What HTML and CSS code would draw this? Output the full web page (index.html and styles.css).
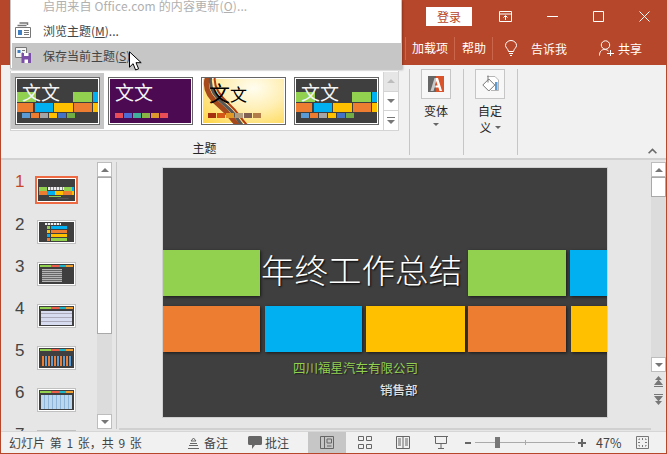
FILE: index.html
```html
<!DOCTYPE html>
<html lang="zh">
<head>
<meta charset="utf-8">
<title>PowerPoint</title>
<link rel="stylesheet" href="styles.css">
</head>
<body>
<div class="app">
  <header class="chrome">
    <div class="win-row">
      <span class="login">登录</span>
      <svg class="win-ico" width="13" height="11" viewBox="0 0 13 11"><path d="M.5.500h12v10H.5zM.5 3h12M6.500 9V5M4.500 6.500l2-2 2 2" fill="none" stroke="#fff"/></svg>
      <svg class="win-ico" width="11" height="11" viewBox="0 0 11 11"><path d="M0 5.500h11" stroke="#fff"/></svg>
      <svg class="win-ico" width="11" height="11" viewBox="0 0 11 11"><path d="M.5.500h10v10H.5z" fill="none" stroke="#fff"/></svg>
      <svg class="win-ico" width="11" height="11" viewBox="0 0 11 11"><path d="M.5.500l10 10M10.500.500l-10 10" stroke="#fff"/></svg>
    </div>
    <div class="tab-row">
      <span class="tab">加载项</span>
      <span class="tab">帮助</span>
      <span class="tab plain">
        <svg width="12" height="16" viewBox="0 0 12 16"><path d="M3.500 11.500C3.200 8.800.5 7.800.5 5.500a5.500 5 0 0 1 11 0c0 2.300-2.700 3.300-3 6zM4 13.500h4M5 15.500h2" fill="none" stroke="#fff"/></svg>
        <span class="tell">告诉我</span>
      </span>
      <span class="share">
        <svg width="15" height="16" viewBox="0 0 15 16"><path d="M.5 15.500c0-4 2-6 5-6 1.500 0 3 .5 4 1.500" fill="none" stroke="#fff"/><circle cx="6.500" cy="5" r="4.200" fill="none" stroke="#fff"/><path d="M8 13.500h7M11.500 10v6" stroke="#fff"/></svg>
        共享
      </span>
    </div>
  </header>

  <section class="ribbon">
    <div class="themes">
      <div class="gallery">
        <div class="theme-cell active">
          <div class="theme dark"><span class="tbar b1"></span><span class="tbar b2"></span><span class="wen w-light">文文</span><span class="dots"><i class="c1"></i><i class="c2"></i><i class="c3"></i><i class="c4"></i><i class="c5"></i><i class="c6"></i></span></div>
        </div>
        <div class="theme-cell">
          <div class="theme purple"><span class="wen w-light">文文</span><span class="dots"><i class="p1"></i><i class="p2"></i><i class="p3"></i><i class="p4"></i><i class="p5"></i><i class="p1"></i></span></div>
        </div>
        <div class="theme-cell">
          <div class="theme sunny">
            <svg class="swoosh" width="83" height="46" viewBox="0 0 83 46"><path d="M6 -2C1 10 8 20 18 28S30 42 36 47" fill="none" stroke="#a6491c" stroke-width="5"/><path d="M9 -2C6 10 13 19 23 27S35 41 40 47" fill="none" stroke="#585858" stroke-width="3"/><path d="M13 -2C11 8 17 17 27 26S38 40 45 47" fill="none" stroke="#b03c14" stroke-width="2"/></svg>
            <span class="wen w-dark">文<span class="wen-small">文</span></span>
            <span class="dots"><i class="s1"></i><i class="s2"></i><i class="s3"></i><i class="s4"></i><i class="s5"></i><i class="s6"></i></span>
          </div>
        </div>
        <div class="theme-cell">
          <div class="theme dark"><span class="tbar b1"></span><span class="tbar b2"></span><span class="wen w-light">文文</span><span class="dots"><i class="c1"></i><i class="c2"></i><i class="c3"></i><i class="c4"></i><i class="c5"></i><i class="c6"></i></span></div>
        </div>
        <div class="gal-btns">
          <span class="gal-btn off"><b class="up"></b></span>
          <span class="gal-btn"><b class="down"></b></span>
          <span class="gal-btn"><b class="more"></b></span>
        </div>
      </div>
      <div class="group-label">主题</div>
    </div>
    <div class="rb-sep"></div>
    <div class="rb-tool">
      <span class="rb-box">
        <svg width="16" height="16" viewBox="0 0 16 16"><rect width="16" height="16" fill="#666"/><path d="M8 0h8v16H8z" fill="#d9542b"/><path d="M8 2h2l4 13h-2.500l-1-3.500H8V9.500h1.600L8.300 5 8 6z" fill="#fff"/><path d="M2.500 15L6.500 2H8v4L6.900 9.500H8v2H6.500l-1 3.500z" fill="#c9c9c9"/></svg>
      </span>
      <span class="rb-text">变体</span>
      <b class="caret"></b>
    </div>
    <div class="rb-sep"></div>
    <div class="rb-tool">
      <span class="rb-box">
        <svg width="17" height="18" viewBox="0 0 17 18"><path d="M5 1.500h8l3.500 3.500v10.500H9" fill="#fff" stroke="#b5b5b5"/><path d="M.8 10l6-6 6 6-6 6z" fill="#fff" stroke="#777"/><path d="M13 7h2.500v8H13z" fill="#5d9bd5"/><path d="M6 .5v7" stroke="#777" fill="none"/></svg>
      </span>
      <span class="rb-text">自定</span>
      <span class="rb-text">义<b class="caret inline"></b></span>
    </div>
    <div class="rb-sep"></div>
    <svg class="collapse" width="9" height="6" viewBox="0 0 9 6"><path d="M.6 5.300L4.500 1.400 8.400 5.300" fill="none" stroke="#6a6a6a" stroke-width="1.600"/></svg>
  </section>

  <main class="workspace">
    <aside class="thumbs">
      <div class="thumb-list">
        <div class="row first"><span class="num cur">1</span><div class="mini sel"><i class="mb g"></i><i class="mb o"></i><i class="m-title"></i><i class="m-sub"></i></div></div>
        <div class="row"><span class="num">2</span><div class="mini"><i class="m-head"></i><i class="ln l1"></i><i class="ln l2"></i><i class="ln l3"></i><i class="ln l4"></i></div></div>
        <div class="row"><span class="num">3</span><div class="mini"><i class="hd"></i><i class="tx"></i></div></div>
        <div class="row"><span class="num">4</span><div class="mini"><i class="hd"></i><i class="tb"></i></div></div>
        <div class="row"><span class="num">5</span><div class="mini"><i class="hd"></i><i class="ch"></i></div></div>
        <div class="row"><span class="num">6</span><div class="mini"><i class="hd"></i><i class="tb blue"></i></div></div>
        <div class="row"><span class="num">7</span><div class="mini"></div></div>
      </div>
      <div class="vscroll">
        <span class="sb-btn"><b class="up"></b></span>
        <span class="sb-thumb long"></span>
        <span class="sb-fill"></span>
        <span class="sb-btn"><b class="down"></b></span>
      </div>
    </aside>
    <div class="pane-line"></div>
    <section class="canvas">
      <div class="slide-area">
        <article class="slide">
          <div class="blocks one">
            <span class="blk green w97"></span>
            <h1 class="title">年终工作总结</h1>
            <span class="blk green w98"></span>
            <span class="blk blue w37"></span>
          </div>
          <div class="blocks two">
            <span class="blk orange w97"></span>
            <span class="blk blue w97"></span>
            <span class="blk yellow w99"></span>
            <span class="blk orange w98"></span>
            <span class="blk yellow w37"></span>
          </div>
          <p class="company">四川福星汽车有限公司</p>
          <p class="dept">销售部</p>
        </article>
      </div>
      <div class="vscroll main">
        <span class="sb-btn"><b class="up"></b></span>
        <span class="sb-thumb short"></span>
        <span class="sb-fill"></span>
        <span class="sb-btn"><b class="down"></b></span>
        <span class="sb-page"><svg width="9" height="11" viewBox="0 0 9 11"><path d="M4.500 0L8 4H1zM4.500 3.500L9 9H0zM0 10h9v1H0z" fill="#777"/></svg></span>
        <span class="sb-page"><svg width="9" height="11" viewBox="0 0 9 11"><path d="M0 0h9v1H0zM0 2h9L4.500 7.500zM1 7h7l-3.500 4z" fill="#777"/></svg></span>
      </div>
    </section>
  </main>

  <footer class="status">
    <span class="st-text">幻灯片 第 1 张，共 9 张</span>
    <span class="st-item notes"><svg width="11" height="12" viewBox="0 0 11 12"><path d="M5.500 1L3 4h5zM2 6.500h7M1 8.500h9M0 11.500h11" fill="none" stroke="#666"/></svg>备注</span>
    <span class="st-item comments"><svg width="14" height="13" viewBox="0 0 14 13"><path d="M1.500 0h11A1.500 1.500 0 0 1 14 1.500v6A1.500 1.500 0 0 1 12.500 9H7l-3 4V9H1.500A1.500 1.500 0 0 1 0 7.500v-6A1.500 1.500 0 0 1 1.500 0z" fill="#666"/></svg>批注</span>
    <span class="view on"><svg width="14" height="13" viewBox="0 0 14 13"><path d="M.5.500h13v12H.5zM4.500.500v12M7 3h4.500v4H7zM7 10h4.500" fill="none" stroke="#666"/></svg></span>
    <span class="view"><svg width="14" height="13" viewBox="0 0 14 13"><path d="M.5.500h5v4h-5zM8.500.500h5v4h-5zM.5 8.500h5v4h-5zM8.500 8.500h5v4h-5z" fill="none" stroke="#666"/></svg></span>
    <span class="view"><svg width="14" height="13" viewBox="0 0 14 13"><path d="M.5.500h13v12H.5zM7 .5v12M2 3h3M2 5h3M2 7h3M2 9h3M9 3h3M9 5h3M9 7h3M9 9h3" fill="none" stroke="#666"/></svg></span>
    <span class="view"><svg width="14" height="13" viewBox="0 0 14 13"><path d="M0 .5h14M1.500.5v7h11v-7M7 7.500V12M4 12.500h6" fill="none" stroke="#666"/></svg></span>
    <span class="zoom">
      <i class="z-sign"></i>
      <span class="z-track"><i class="z-mid"></i><i class="z-knob"></i></span>
      <i class="z-sign plus"></i>
    </span>
    <span class="pct">47%</span>
    <span class="fit"><svg width="13" height="13" viewBox="0 0 13 13"><path d="M.5.500h12v12H.5zM3 4V3h1M9 3h1v1M3 9v1h1M9 10h1V9M6.500 2v2M6.500 9v2M2 6.500h2M9 6.500h2" fill="none" stroke="#777"/></svg></span>
  </footer>

  <nav class="menu">
    <div class="mi dim"><span class="mi-ico"></span><span>启用来自 Office.com 的内容更新(<u>O</u>)...</span></div>
    <div class="mi">
      <span class="mi-ico"><svg width="16" height="16" viewBox="0 0 16 16"><path d="M4.500 1h8v2M2.500 3.500h9" fill="none" stroke="#777" stroke-width="1.500"/><path d="M.5 5.500h15v10H.5z" fill="#fff" stroke="#777"/><path d="M3 8h4v5H3z" fill="#3f7fc1"/><path d="M9 8.500h5M9 10.500h5M9 12.500h5" stroke="#777"/></svg></span>
      <span>浏览主题(<u>M</u>)...</span>
    </div>
    <div class="mi hot">
      <span class="mi-ico"><svg width="16" height="16" viewBox="0 0 16 16"><path d="M.5.500h11v10H.5z" fill="#f4f4f4" stroke="#777"/><path d="M2.500 3h3v3h-3z" fill="#3f7fc1"/><path d="M7 3.500h3M7 6h1" stroke="#777"/><path d="M6.500 6H16v10H6.500z" fill="#7b4ea8"/><path d="M9 6h4.500v3H9zM9.500 12.500h3.500V16H9.500z" fill="#fff"/></svg></span>
      <span>保存当前主题(<u>S</u>)</span>
      <svg class="cursor" width="13" height="20" viewBox="0 0 13 20"><path d="M.5.800v15.400l3.600-3.500 2.500 6.300 3-1.200-2.600-6.100h5.200z" fill="#fff" stroke="#000"/></svg>
    </div>
  </nav>
</div>
</body>
</html>
```
FILE: styles.css
```css
* { box-sizing: border-box; }
html, body { margin: 0; height: 100%; }
body { font-family: "Noto Sans CJK SC", "Liberation Sans", sans-serif; overflow: hidden; }
i, b { display: block; font-style: normal; }
svg { display: block; flex: none; }

.app { position: relative; width: 667px; height: 454px; display: flex; flex-direction: column; background: #e6e6e6; border: 1px solid #b7472a; border-top: 0; overflow: hidden; }

/* title bar */
.chrome { height: 65px; background: #b7472a; color: #fff; flex: none; }
.win-row { height: 33px; display: flex; align-items: center; padding: 0 0 1px 425px; }
.login { width: 46px; height: 19px; background: #fff; color: #b7472a; font-size: 12px; line-height: 19px; text-align: center; margin-right: 27px; }
.win-ico:nth-of-type(1) { margin-right: 35px; }
.win-ico:nth-of-type(2) { margin-right: 35px; }
.win-ico:nth-of-type(3) { margin-right: 35px; }
.tab-row { height: 32px; display: flex; align-items: center; padding: 0 0 2px 404px; font-size: 12px; }
.tab { height: 23px; line-height: 21px; padding: 0 6px; border-left: 1px solid #c9664b; white-space: nowrap; }
.tab + .tab { padding: 0 6px 0 7px; }
.tab.plain { display: flex; align-items: center; padding-left: 12px; }
.tell { margin-left: 14px; }
.share { display: flex; align-items: center; gap: 4px; margin-left: 26px; }

/* ribbon */
.ribbon { height: 95px; flex: none; background: #f1f1f1; border-bottom: 2px solid #d1d1d1; display: flex; padding: 4px 0 0 9px; position: relative; }
.themes { width: 389px; display: flex; flex-direction: column; flex: none; }
.gallery { height: 60px; margin-top: 2px; display: flex; background: #fff; border: 1px solid #d4d4d4; border-top: 0; width: 389px; flex: none; }
.theme-cell { width: 93px; height: 56px; margin-top: 2px; padding: 4px; flex: none; }
.theme-cell.active { background: #c6c6c6; }
.theme { position: relative; width: 85px; height: 48px; border: 1px solid #666; outline: 1px solid #fff; outline-offset: -2px; overflow: hidden; }
.dark { background: #3f3f3f; }
.purple { background: #4c0a52; }
.sunny { background: radial-gradient(ellipse at 62% 22%, #fffdf0 0, #fff0b8 40%, #ffd33c 100%); }
.swoosh { position: absolute; left: 0; top: 0; }
.wen { position: absolute; left: 6px; top: 3px; z-index: 1; font-size: 19px; line-height: 22px; font-weight: 400; white-space: nowrap; }
.w-light { color: #f4f4f4; }
.w-dark { color: #000; left: 7px; font-size: 21px; }
.wen-small { font-size: 17px; }
.tbar { position: absolute; left: 1px; right: 1px; height: 10px; }
.b1 { top: 14px; background: linear-gradient(90deg, #92d050 0 19px, transparent 19px 56px, #92d050 56px 75px, transparent 75px 76px, #00b0f0 76px); }
.b2 { top: 25px; height: 9px; background: linear-gradient(90deg, #ed7d31 0 16px, transparent 16px 18px, #00b0f0 18px 36px, transparent 36px 37px, #ffc000 37px 56px, transparent 56px 57px, #ed7d31 57px 75px, transparent 75px 76px, #ffc000 76px); }
.dots { position: absolute; left: 6px; bottom: 6px; display: flex; gap: 1px; height: 5px; }
.dots i { width: 8px; height: 5px; }
.c1 { background: #5b9bd5; } .c2 { background: #ed7d31; } .c3 { background: #a5a5a5; } .c4 { background: #ffc000; } .c5 { background: #4472c4; } .c6 { background: #70ad47; }
.p1 { background: #e84c56; } .p2 { background: #4a6cd4; } .p3 { background: #3fae9a; } .p4 { background: #8ab545; } .p5 { background: #dc9a2e; }
.s1 { background: #a5300f; } .s2 { background: #d55816; } .s3 { background: #e19825; } .s4 { background: #b19c7d; } .s5 { background: #7f5f52; } .s6 { background: #b27d49; }
.gal-btns { width: 15px; display: flex; flex-direction: column; margin-left: auto; border-left: 1px solid #d4d4d4; margin-top: 1px; }
.gal-btn { flex: 1; display: flex; align-items: center; justify-content: center; border-bottom: 1px solid #d4d4d4; background: #fff; }
.gal-btn:last-child { border-bottom: 0; }
.gal-btn.off { background: #e6e6e6; }
.up, .down, .more { width: 0; height: 0; border-left: 4px solid transparent; border-right: 4px solid transparent; }
.up { border-bottom: 4px solid #777; }
.off .up { border-bottom-color: #bdbdbd; }
.down, .more { border-top: 4px solid #777; }
.more { position: relative; margin-top: 3px; }
.more::before { content: ""; position: absolute; left: -4px; top: -7px; width: 8px; height: 1px; background: #777; }
.group-label { text-align: center; font-size: 12px; line-height: 16px; margin-top: 9px; color: #262626; }
.rb-sep { width: 1px; height: 86px; background: #c6c6c6; flex: none; }
.themes + .rb-sep { margin-left: 10px; }
.rb-tool { width: 53px; flex: none; display: flex; flex-direction: column; align-items: center; padding-right: 1px; font-size: 12px; color: #262626; }
.rb-box { width: 30px; height: 30px; border: 1px solid #c6c6c6; background: #f7f7f7; display: flex; align-items: center; justify-content: center; margin-bottom: 3px; }
.rb-text { line-height: 17px; display: flex; align-items: center; }
.caret { width: 0; height: 0; border-left: 3px solid transparent; border-right: 3px solid transparent; border-top: 3px solid #666; margin-top: 4px; }
.caret.inline { margin: 0 0 0 3px; }
.collapse { position: absolute; right: 9px; bottom: 4px; }

/* workspace */
.workspace { flex: 1; display: flex; min-height: 0; }
.thumbs { width: 112px; flex: none; display: flex; position: relative; overflow: hidden; }
.thumb-list { width: 96px; flex: none; padding-top: 16px; overflow: hidden; }
.row { height: 42px; display: flex; padding-left: 36px; position: relative; }
.row.first { height: 44px; }
.num { position: absolute; left: 14px; top: -7px; font-size: 17px; line-height: 24px; color: #444; font-family: "Liberation Sans", sans-serif; }
.first .num { left: 14px; top: -6px; }
.num.cur { color: #c8472a; }
.mini { position: relative; width: 39px; height: 24px; background: #3f3f3f; border: 1px solid #c0c0c0; box-shadow: inset 0 0 0 1px #fff; overflow: hidden; }
.mini.sel { border-color: #fff; box-shadow: 0 0 0 2px #ee6a43; margin-top: 2px; overflow: visible; }
.mb { position: absolute; left: 1px; right: 1px; height: 4px; }
.mb.g { top: 8px; background: linear-gradient(90deg, #92d050 0 8px, transparent 8px 25px, #92d050 25px 33px, #00b0f0 33px); }
.mb.o { top: 12px; background: linear-gradient(90deg, #ed7d31 0 8px, #00b0f0 8px 16px, #ffc000 16px 24px, #ed7d31 24px 33px, #ffc000 33px); }
.m-title { position: absolute; left: 10px; top: 8px; width: 16px; height: 3px; background: repeating-linear-gradient(90deg, #eee 0 2px, #888 2px 3px); }
.m-sub { position: absolute; left: 11px; top: 17px; width: 12px; height: 1px; background: #92d050; box-shadow: 8px 2px 0 -0.4px #aaa; }
.m-head { position: absolute; left: 7px; top: 2px; width: 16px; height: 2px; background: repeating-linear-gradient(90deg, #eee 0 2px, #777 2px 3px); }
.ln { position: absolute; left: 9px; width: 20px; height: 3px; }
.l1 { top: 5px; background: linear-gradient(90deg, #92d050 0 3px, transparent 3px 4px, #00b0f0 4px); }
.l2 { top: 9px; background: linear-gradient(90deg, #ffc000 0 3px, transparent 3px 4px, #ed7d31 4px); }
.l3 { top: 13px; background: linear-gradient(90deg, #00b0f0 0 3px, transparent 3px 4px, #ffc000 4px); }
.l4 { top: 17px; background: linear-gradient(90deg, #ed7d31 0 3px, transparent 3px 4px, #92d050 4px); }
.hd { position: absolute; left: 2px; right: 2px; top: 2px; height: 2px; background: linear-gradient(90deg, #92d050 0 33%, #ed5f4a 33% 60%, #1fb5c9 60% 80%, #f0a030 80%); }
.tx { position: absolute; left: 4px; top: 6px; width: 20px; height: 13px; background: repeating-linear-gradient(0deg, #b5b5b5 0 1px, #666 1px 2px); }
.tb { position: absolute; left: 3px; right: 3px; top: 6px; height: 14px; background: repeating-linear-gradient(0deg, #d8dcf0 0 3px, #aab 3px 4px); }
.tb.blue { background: repeating-linear-gradient(90deg, #bcd6ee 0 3px, #8eb4d8 3px 4px); }
.ch { position: absolute; left: 4px; right: 3px; top: 9px; height: 10px; background: repeating-linear-gradient(90deg, #ed7d31 0 2px, #333 2px 3px, #5b9bd5 3px 5px, #333 5px 6px); }

.vscroll { width: 15px; flex: none; display: flex; flex-direction: column; padding: 2px 0; }
.vscroll.main { padding-bottom: 23px; }
.sb-btn { height: 15px; background: #fff; border: 1px solid #bdbdbd; display: flex; align-items: center; justify-content: center; flex: none; }
.sb-thumb { background: #fff; border: 1px solid #a9a9a9; flex: none; }
.long { height: 157px; }
.short { height: 20px; }
.sb-fill { flex: 1; background: #dcdcdc; }
.sb-page { height: 18px; display: flex; align-items: center; justify-content: center; flex: none; }
.pane-line { width: 1px; background: #c6c6c6; margin: 2px 0 2px 3px; flex: none; }

.canvas { flex: 1; display: flex; min-width: 0; }
.slide-area { flex: 1; padding: 8px 0 0 44px; border-bottom: 2px solid #d0d0d0; margin: 0 0 1px 2px; }
.slide { width: 444px; height: 249px; background: #3f3f3f; outline: 1px solid #cfcfcf; padding-top: 82px; overflow: hidden; }
.blocks { display: flex; height: 46px; }
.two { margin-top: 10px; }
.blk { flex: none; height: 46px; box-shadow: 1px 1px 3px rgba(0,0,0,.6); }
.green { background: #92d050; } .orange { background: #ed7d31; } .blue { background: #00b0f0; } .yellow { background: #ffc000; }
.w97 { width: 97px; } .w98 { width: 98px; } .w99 { width: 99px; } .w37 { width: 37px; }
.two .blk + .blk { margin-left: 5px; }
.two .yellow.w99 { margin-left: 4px; }
.two .orange.w98 { margin-left: 3px; }
.two .w37 { margin-left: 4px; }
.title { width: 208px; margin: 0; padding-left: 1px; font-size: 33.500px; font-weight: 300; line-height: 38px; height: 46px; color: #fff; text-align: left; white-space: nowrap; text-shadow: 1px 1px 2px #000; }
.one .w37 { margin-left: 4px; }
.company { margin: 7px 0 0 130px; font-size: 12.500px; line-height: 18px; color: #92d050; text-shadow: 1px 1px 1px #222; }
.dept { margin: 4px 0 0 217px; font-size: 12.500px; font-weight: 500; line-height: 18px; color: #e0e0e0; text-shadow: 1px 1px 1px #222; }

/* status */
.status { height: 22px; flex: none; background: #f1f1f1; border-top: 1px solid #d6d6d6; display: flex; align-items: center; font-size: 12px; color: #444; position: relative; }
.st-text { margin-left: 8px; width: 179px; white-space: nowrap; word-spacing: 2px; }
.st-item { display: flex; align-items: center; }
.notes svg { margin-right: 5px; }
.comments { margin-left: 20px; margin-right: 19px; }
.comments svg { margin-right: 3px; }
.view { width: 38px; height: 21px; display: flex; align-items: center; justify-content: center; flex: none; }
.view.on { background: #c6c6c6; }
.zoom { display: flex; align-items: center; margin-left: 5px; }
.z-sign { width: 6px; height: 2px; background: #666; position: relative; flex: none; }
.z-sign.plus { width: 8px; }
.z-sign.plus::after { content: ""; position: absolute; left: 3px; top: -3px; width: 2px; height: 8px; background: #666; }
.z-track { position: relative; width: 100px; height: 1px; background: #aaa; margin: 0 3px 0 4px; flex: none; }
.z-mid { position: absolute; left: 50px; top: -2px; width: 1px; height: 5px; background: #aaa; }
.z-knob { position: absolute; left: 20px; top: -5px; width: 5px; height: 11px; background: #777; }
.pct { margin-left: 10px; width: 40px; font-size: 12.500px; }

/* menu */
.menu { position: absolute; left: 9px; top: 0; width: 392px; height: 69px; background: #fff; border: 1px solid #c6c6c6; border-top: 0; box-shadow: 1px 1px 2px rgba(0,0,0,.25); padding-left: 1px; font-size: 12px; color: #444; }
.mi { height: 25px; display: flex; align-items: center; position: relative; padding-bottom: 1px; }
.mi:first-child { height: 18px; padding-bottom: 8px; letter-spacing: .15px; }
.mi.dim { color: #b0b0b0; }
.mi.hot { background: #c6c6c6; }
.mi-ico { width: 31px; padding-left: 3px; flex: none; }
.cursor { position: absolute; left: 117px; top: 8px; }
```
